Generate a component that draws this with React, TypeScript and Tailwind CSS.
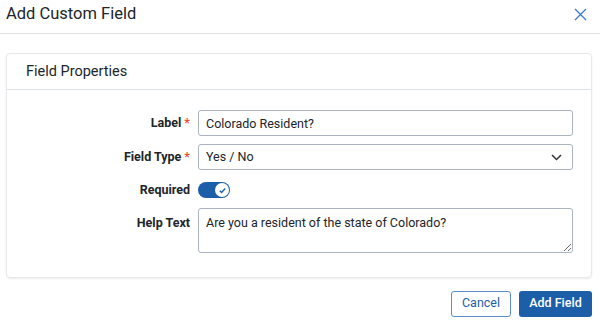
import React from 'react';

const Row: React.FC<{ label: string; required?: boolean; align?: 'center' | 'start'; children: React.ReactNode }> = ({
  label,
  required,
  align = 'center',
  children,
}) => (
  <div className={`flex ${align === 'center' ? 'items-center' : 'items-start'}`}>
    <div className={`w-[191px] shrink-0 pr-[8px] text-right text-[12.5px] font-bold text-[#212529] ${align === 'start' ? 'pt-[6px]' : ''}`}>
      {label}
      {required && <span className="ml-[3px] text-[#e5532d]">*</span>}
    </div>
    <div className="flex-1">{children}</div>
  </div>
);

const App: React.FC = () => {
  return (
    <div className="w-[600px] h-[322px] bg-white overflow-hidden" style={{ fontFamily: 'Roboto, "Liberation Sans", sans-serif' }}>
      <div className="flex h-[34px] items-center justify-between border-b border-[#dde0e6] pl-[6px] pr-[13px]">
        <h2 className="text-[16.5px] text-[#212529] leading-none pb-[4px]">Add Custom Field</h2>
        <button className="text-[#3a78c9] pb-[4px]">
          <svg width="13" height="13" viewBox="0 0 13 13" fill="none" stroke="currentColor" strokeWidth="1.3">
            <path d="M1 1L12 12M12 1L1 12" />
          </svg>
        </button>
      </div>

      <div className="ml-[6px] mr-[8px] mt-[19px] rounded-[4px] border border-[#e6e8ec] shadow-[0_1px_2px_rgba(0,0,0,0.08)]">
        <div className="flex h-[36px] items-center border-b border-[#dde2ea] pl-[19px]">
          <span className="text-[14.5px] text-[#212529]">Field Properties</span>
        </div>
        <div className="flex flex-col gap-[8px] pr-[18px] pt-[20px] pb-[24px]">
          <Row label="Label" required>
            <input
              defaultValue="Colorado Resident?"
              className="h-[26px] w-full rounded-[3px] border border-[#a9b3c1] px-[7px] text-[12.5px] text-[#212529] outline-none"
            />
          </Row>
          <Row label="Field Type" required>
            <div className="flex h-[26px] w-full items-center justify-between rounded-[3px] border border-[#a9b3c1] pl-[7px] pr-[10px] text-[12.5px] text-[#212529]">
              <span>Yes / No</span>
              <svg width="11" height="7" viewBox="0 0 11 7" fill="none" stroke="#333" strokeWidth="1.5">
                <path d="M1 1l4.5 4.5L10 1" />
              </svg>
            </div>
          </Row>
          <div className="mt-[3px]">
            <Row label="Required">
              <div className="flex h-[16px] w-[32px] items-center justify-end rounded-full bg-[#1d5ea8] pr-[1px]">
                <div className="flex h-[14px] w-[14px] items-center justify-center rounded-full bg-white">
                  <svg width="9" height="9" viewBox="0 0 10 10" fill="none" stroke="#1d5ea8" strokeWidth="1.5">
                    <path d="M2 5.2l2 2L8 2.8" />
                  </svg>
                </div>
              </div>
            </Row>
          </div>
          <Row label="Help Text" align="start">
            <textarea
              defaultValue="Are you a resident of the state of Colorado?"
              className="block h-[45px] w-full rounded-[3px] border border-[#a9b3c1] px-[7px] py-[5px] text-[12.5px] text-[#212529] outline-none"
            />
          </Row>
        </div>
      </div>

      <div className="mt-[13px] flex justify-end gap-[8px] pr-[8px]">
        <button className="h-[26px] w-[60px] rounded-[3px] border border-[#5a8ccc] bg-white text-[12.5px] text-[#1d5ea8]">
          Cancel
        </button>
        <button className="h-[26px] w-[73px] rounded-[3px] bg-[#1d5ea8] text-[12.5px] font-medium text-white">
          Add Field
        </button>
      </div>
    </div>
  );
};

export default App;
